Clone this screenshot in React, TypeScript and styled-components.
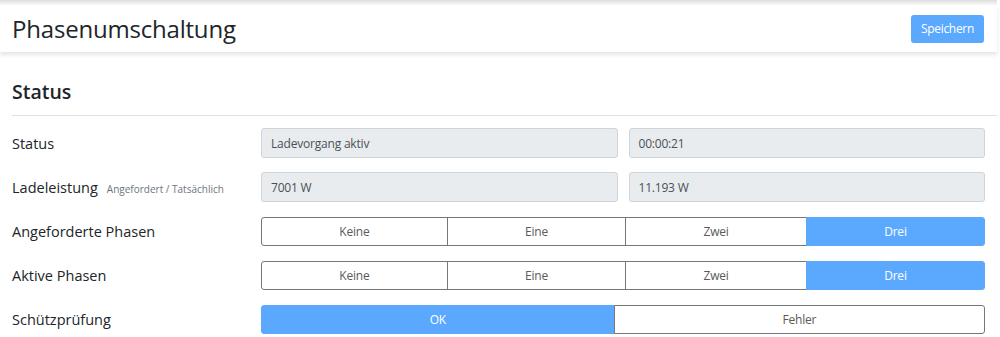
import React, { useState } from "react";
import styled, { createGlobalStyle } from "styled-components";

const GlobalStyle = createGlobalStyle`
  html, body {
    margin: 0;
    padding: 0;
    background: #fff;
    font-family: "Open Sans", "Noto Sans", sans-serif;
    color: #212529;
  }
  * { box-sizing: border-box; }
`;

const Page = styled.div`
  width: 997px;
  padding-top: 5px;
  background: linear-gradient(#dedede, #fff 6px) no-repeat;
  background-size: 100% 6px;
`;

const Header = styled.header`
  height: 47px;
  display: flex;
  align-items: center;
  justify-content: space-between;
  padding: 0 13px 0 12px;
  background: #fff;
  box-shadow: 0 3px 4px rgba(0, 0, 0, 0.1);
`;

const Title = styled.h1`
  margin: 0;
  font-size: 24px;
  font-weight: 400;
  letter-spacing: -0.2px;
  color: #212529;
`;

const SaveButton = styled.button`
  height: 28px;
  padding: 0 10px;
  border: none;
  border-radius: 3px;
  background: #5aa9ff;
  color: #fff;
  font-family: inherit;
  font-size: 12px;
  letter-spacing: -0.3px;
  cursor: pointer;
`;

const Section = styled.section`
  padding: 0 12px;
`;

const SectionTitle = styled.h2`
  margin: 0 -12px 0 0;
  padding: 26px 0 10px;
  font-size: 19.5px;
  font-weight: 600;
  border-bottom: 1px solid #dee2e6;
`;

const Rows = styled.div`
  display: flex;
  flex-direction: column;
  gap: 14px;
  padding-top: 12px;
`;

const Row = styled.div`
  display: grid;
  grid-template-columns: 249px 1fr;
  align-items: center;
  height: 30px;
`;

const Label = styled.div`
  font-size: 14.5px;
  display: flex;
  align-items: baseline;
  gap: 9px;
`;

const Hint = styled.small`
  font-size: 10px;
  color: #6c757d;
`;

const Pair = styled.div`
  display: grid;
  grid-template-columns: 1fr 1fr;
  gap: 11px;
`;

const ReadOnly = styled.div`
  height: 30px;
  display: flex;
  align-items: center;
  padding: 0 9px;
  background: #e9ecef;
  border: 1px solid #ced4da;
  border-radius: 3px;
  font-size: 12px;
  color: #495057;
  letter-spacing: -0.2px;
`;

const Group = styled.div`
  display: flex;
  height: 29px;
`;

const Segment = styled.button<{ $active: boolean }>`
  flex: 1 1 auto;
  padding: 0 12px;
  margin-left: -1px;
  border: 1px solid ${({ $active }) => ($active ? "#5aa9ff" : "#777")};
  background: ${({ $active }) => ($active ? "#5aa9ff" : "#fff")};
  color: ${({ $active }) => ($active ? "#fff" : "#5a5a5a")};
  font-family: inherit;
  font-size: 12px;
  letter-spacing: -0.2px;
  cursor: pointer;
  &:first-child {
    margin-left: 0;
    border-radius: 3px 0 0 3px;
  }
  &:last-child {
    border-radius: 0 3px 3px 0;
  }
`;

const ToggleGroup: React.FC<{ options: string[]; initial: number }> = ({
  options,
  initial,
}) => {
  const [value, setValue] = useState(initial);
  return (
    <Group>
      {options.map((o, i) => (
        <Segment key={o} $active={i === value} onClick={() => setValue(i)}>
          {o}
        </Segment>
      ))}
    </Group>
  );
};

const phases = ["Keine", "Eine", "Zwei", "Drei"];

const App: React.FC = () => {
  return (
    <Page>
      <GlobalStyle />
      <Header>
        <Title>Phasenumschaltung</Title>
        <SaveButton>Speichern</SaveButton>
      </Header>
      <Section>
        <SectionTitle>Status</SectionTitle>
        <Rows>
          <Row>
            <Label>Status</Label>
            <Pair>
              <ReadOnly>Ladevorgang aktiv</ReadOnly>
              <ReadOnly>00:00:21</ReadOnly>
            </Pair>
          </Row>
          <Row>
            <Label>
              Ladeleistung <Hint>Angefordert / Tatsächlich</Hint>
            </Label>
            <Pair>
              <ReadOnly>7001 W</ReadOnly>
              <ReadOnly>11.193 W</ReadOnly>
            </Pair>
          </Row>
          <Row>
            <Label>Angeforderte Phasen</Label>
            <ToggleGroup options={phases} initial={3} />
          </Row>
          <Row>
            <Label>Aktive Phasen</Label>
            <ToggleGroup options={phases} initial={3} />
          </Row>
          <Row>
            <Label>Schützprüfung</Label>
            <ToggleGroup options={["OK", "Fehler"]} initial={0} />
          </Row>
        </Rows>
      </Section>
    </Page>
  );
};

export default App;
